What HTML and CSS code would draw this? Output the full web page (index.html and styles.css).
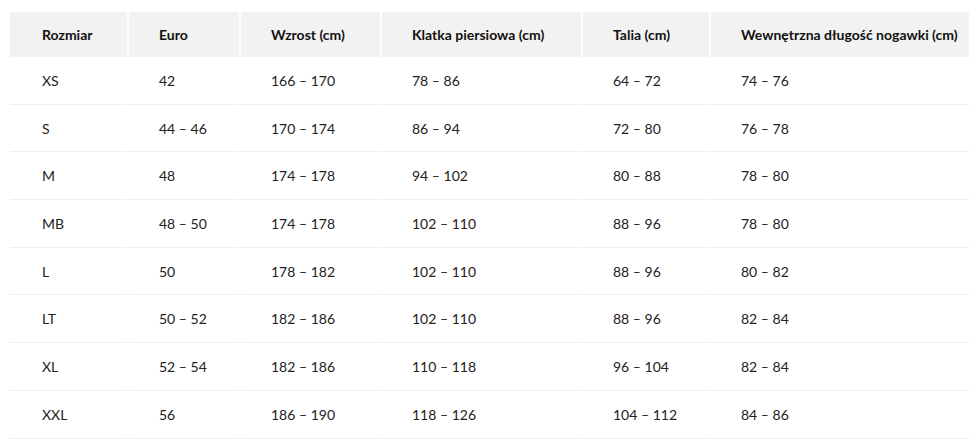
FILE: index.html
```html
<!DOCTYPE html>
<html lang="pl">
<head>
<meta charset="utf-8">
<title>Tabela rozmiarów</title>
<link rel="stylesheet" href="styles.css">
</head>
<body>
<table class="sizes">
  <colgroup>
    <col class="c1"><col class="c2"><col class="c3"><col class="c4"><col class="c5"><col class="c6">
  </colgroup>
  <thead>
    <tr>
      <th>Rozmiar</th><th>Euro</th><th>Wzrost (cm)</th><th>Klatka piersiowa (cm)</th><th>Talia (cm)</th><th>Wewnętrzna długość nogawki (cm)</th>
    </tr>
  </thead>
  <tbody>
    <tr><td>XS</td><td>42</td><td>166 – 170</td><td>78 – 86</td><td>64 – 72</td><td>74 – 76</td></tr>
    <tr><td>S</td><td>44 – 46</td><td>170 – 174</td><td>86 – 94</td><td>72 – 80</td><td>76 – 78</td></tr>
    <tr><td>M</td><td>48</td><td>174 – 178</td><td>94 – 102</td><td>80 – 88</td><td>78 – 80</td></tr>
    <tr><td>MB</td><td>48 – 50</td><td>174 – 178</td><td>102 – 110</td><td>88 – 96</td><td>78 – 80</td></tr>
    <tr><td>L</td><td>50</td><td>178 – 182</td><td>102 – 110</td><td>88 – 96</td><td>80 – 82</td></tr>
    <tr><td>LT</td><td>50 – 52</td><td>182 – 186</td><td>102 – 110</td><td>88 – 96</td><td>82 – 84</td></tr>
    <tr><td>XL</td><td>52 – 54</td><td>182 – 186</td><td>110 – 118</td><td>96 – 104</td><td>82 – 84</td></tr>
    <tr><td>XXL</td><td>56</td><td>186 – 190</td><td>118 – 126</td><td>104 – 112</td><td>84 – 86</td></tr>
  </tbody>
</table>
</body>
</html>
```
FILE: styles.css
```css
html, body {
  margin: 0;
  background: #fff;
}
body {
  padding: 12px 0 0 10px;
  font-family: Lato, "Open Sans", sans-serif;
  font-size: 14px;
  color: #222;
}
.sizes {
  width: 959px;
  table-layout: fixed;
  border-collapse: separate;
  border-spacing: 0;
}
.c1 { width: 117px; }
.c2 { width: 112px; }
.c3 { width: 141px; }
.c4 { width: 201px; }
.c5 { width: 128px; }
.c6 { width: 260px; }
.sizes th {
  background: #f2f2f2;
  color: #111;
  font-weight: 700;
  text-align: left;
  height: 45px;
  padding: 0 0 0 30px;
  border-left: 2px solid #fff;
  white-space: nowrap;
  box-sizing: border-box;
}
.sizes th:first-child {
  border-left: 0;
  padding-left: 32px;
}
.sizes td {
  height: 47.7px;
  padding: 0 0 0 30px;
  border-left: 2px solid transparent;
  border-bottom: 1px solid #efefef;
  box-sizing: border-box;
  white-space: nowrap;
}
.sizes td:first-child {
  border-left: 0;
  padding-left: 32px;
}
```
